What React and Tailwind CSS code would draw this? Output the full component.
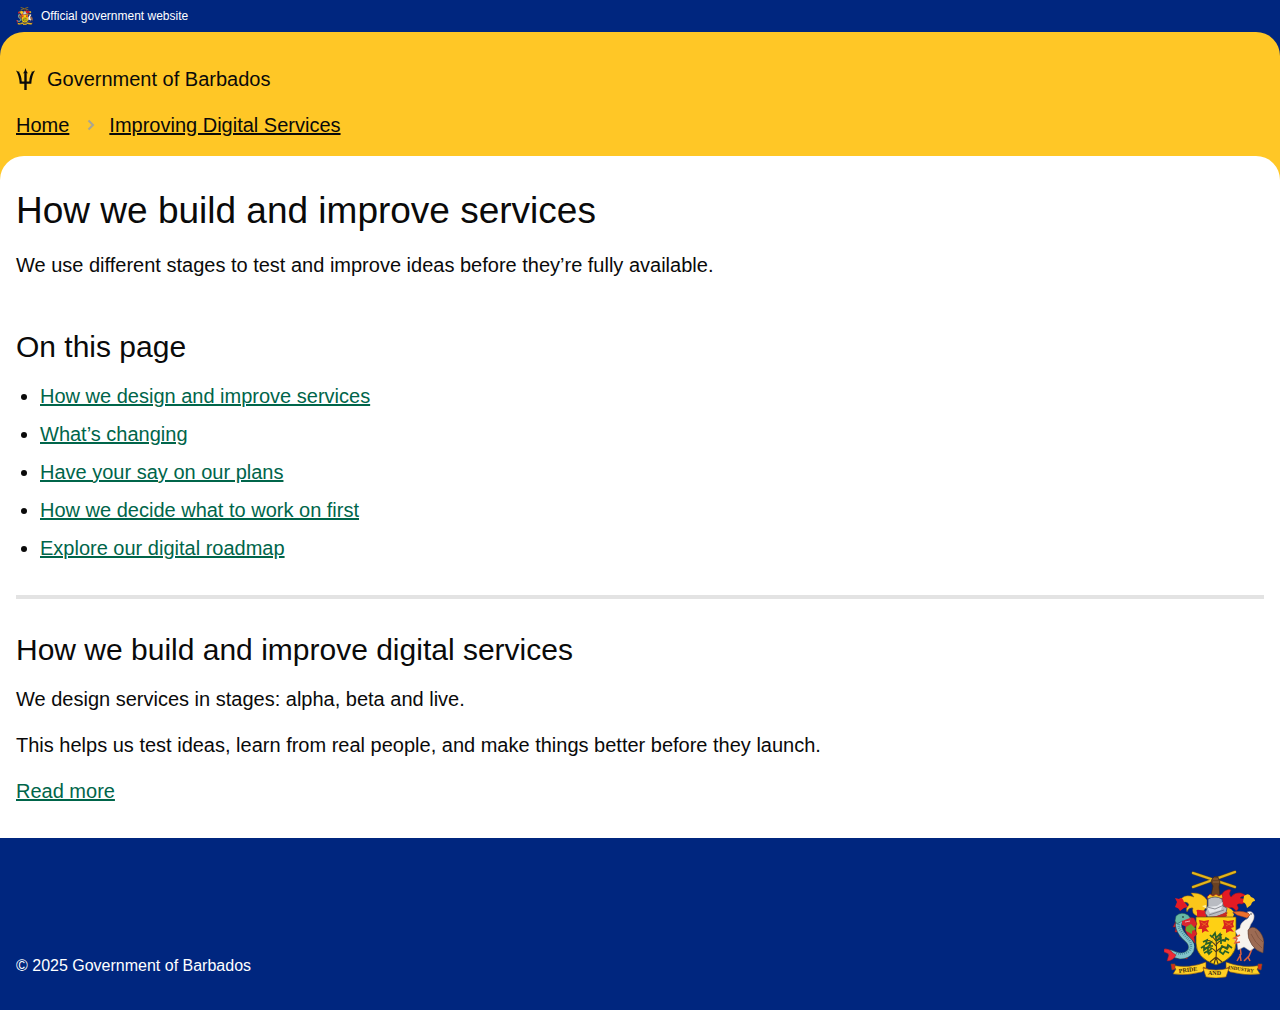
import React from 'react';

function CoatOfArms({ className }) {
  return (
    <svg viewBox="0 0 100 108" className={className} role="img" aria-label="Coat of arms of Barbados">
      {/* crossed cane and arm */}
      <g strokeLinecap="round" fill="none">
        <path d="M29 3 71 17M29 17 71 2" stroke="#705316" strokeWidth="3" />
        <path d="M29 3 71 17M29 17 71 2" stroke="#e3b51d" strokeWidth="2.200" />
      </g>
      <path d="M48 9q2-4 6-2l2 5-1 5 1 9h-9l2-10-2-4z" fill="#6b4222" stroke="#352315" strokeWidth=".6" />
      <path d="M49 9h5M49 12h6" stroke="#a57346" strokeWidth=".7" />
      {/* mantling */}
      <g strokeLinejoin="round">
        <path d="M43 30q-5-8-16-7l3 4q-8-3-12 1-3 2-4 5 3 2 7-1 3 0 4 3-4 3-2 7 2-5 6-4-2 5 4 8l6-4 4-6z" fill="#fbc61b" stroke="#8a5d16" strokeWidth=".5" />
        <path d="M20 32q-2-6-5-3l-4-1 2 4-2 5q4 1 5 4l4-3 4-1-2-3z" fill="#e31b23" />
        <path d="M33 42q-2-3 3-2l7 1-1 7q-6-1-9 1z" fill="#e31b23" />
        <path d="M38 36l4-1 1 4z" fill="#fff0a0" />
        <path d="M56 29q2-8 7-9 2-1 4 0-3 4 0 7 4-5 10-4 4 1 6 4-5-2-7 1 8 1 9 6-4-3-7 0-4-1-5 1 3 4-1 6-3-5-7-3 1 4-3 6l-6-8z" fill="#e31b23" stroke="#8c171a" strokeWidth=".5" />
        <path d="M80 26q5-4 7 1 4 1 4 4-3 0-4 4l-4 3q-1-5-4-6zM62 37l5 2 3 3-4 2-4-2z" fill="#fbc61b" />
        <path d="M60 46l6-5 4 3-1 3h-9z" fill="#fbc61b" />
      </g>
      <path d="M43 27l3-3 3 2 3-2 3 2 3-2 1 4-7 2-8-1z" fill="#f8c31b" stroke="#a71e1c" strokeWidth=".8" />
      {/* helmet */}
      <path d="M44 29q7-4 14 0l1 7 4 2-1 5q-9 5-18 4l-3-4 3-7z" fill="#b9bcc2" stroke="#55565d" strokeWidth=".8" />
      <path d="M43 37l10-1 6-4-2 8-11 3z" fill="#e6e8ec" />
      <path d="M43 37l8 2 9-4M45 45l15-5" stroke="#777a82" strokeWidth=".8" fill="none" />
      <path d="M44 47q10 0 18-5l1 4-3 2H44z" fill="#c92b24" />
      {/* shield */}
      <path d="M32 47h40v26q0 15-20 22-20-7-20-22z" fill="#fed014" stroke="#625012" strokeWidth=".7" />
      {/* flowers */}
      <path d="M35 50l5 1 5-1-1 4 1 3-3 1 3 4-4-1-3 2 0-4-4 0 2-4zM59 50l5 1 6-1-1 4 1 3-3 1 3 4-4-1-4 2 0-4-4 0 2-4z" fill="#d9261f" />
      <path d="M37 52l6 4M43 52l-5 4M61 52l7 4M68 52l-6 4" stroke="#f07b20" strokeWidth=".7" />
      {/* bearded fig tree */}
      <path d="M52 90q1-12 0-24M52 82q-4-6-12-4M52 82q6-7 13-4M52 76q-5-7-11-5M52 75q4-6 11-6M52 71l-4-5M53 70l5-6M52 87l-6 5M52 87l6 5M52 87l-2 7M52 87l2 7" stroke="#4e391a" strokeWidth="1.1" fill="none" />
      <path d="M37 78l3-2 0 4 4-3 0 5 4-4M39 72l4-2-1 4 5-2-2 4 4 0M46 65l2 2 3-4 1 5 4-4 1 4-5 3M65 70l-3-2-1 3-4-1 0 4M68 78l-4-3-1 4-5-3-2 5M40 83l4-2 1 3 3-3M65 83l-4-2-2 3-4-3" stroke="#286028" strokeWidth="1.7" fill="none" />
      {/* dolphin */}
      <path d="M22 47l8 1 3 6-3 4 3 6-3 3 1 6-6-5-4-8 1-7zM12 51l-3 6 3 0-1 5 4 0 1 5 5-2-5-12zM25 84l-2 5-6-2z" fill="#d8222c" stroke="#8b1a27" strokeWidth=".5" />
      <path d="M20 47q-7 4-5 11 2 6 8 11 6 5 4 11-3 6-11 6-5-1-9-3" stroke="#30545a" strokeWidth="6.500" strokeLinecap="round" fill="none" />
      <path d="M20 47q-7 4-5 11 2 6 8 11 6 5 4 11-3 6-11 6-5-1-9-3" stroke="#82c3cb" strokeWidth="5.300" strokeLinecap="round" fill="none" />
      <path d="M16 50q-3 6 1 11 4 5 8 9 4 5 0 11-5 4-13 2" stroke="#468b98" strokeWidth="2.500" strokeDasharray=".8 1.200" fill="none" />
      <path d="M12 46q5-5 12-1l3 4-3 4-6-2-5 3-2-3z" fill="#67b9a5" stroke="#235c4c" strokeWidth=".5" />
      <path d="M18 51l8-3 2 4-5 5-5-2z" fill="#d92531" /><path d="M21 52l5-1" stroke="#fff" strokeWidth=".6" />
      <circle cx="19" cy="47" r=".8" fill="#111" />
      <path d="M22 57l5-3 5 5-4 2 0 3-6-3z" fill="#6da52f" />
      <path d="M9 83q-4-5-9-4l0 3 5 2-2 7q6 0 9-6z" fill="#ee2a36" stroke="#861d29" strokeWidth=".5" />
      {/* pelican */}
      <path d="M76 76l1 8-4 7M76 84l1 7M88 79l-3 7-5 5M84 87l2 4" stroke="#de603b" strokeWidth="1.500" fill="none" />
      <path d="M83 42q5-2 7 3 1 4-3 9l-2 5 4 4 4 13-7 5-6-4-6 3-1-7-3-4 4-3-3-5 5-3q0-5 5-8 5-2 4-6z" fill="#f7f3ee" stroke="#a89c96" strokeWidth=".5" />
      <path d="M84 43q-7-3-15-1l4 3 10 3 3-3z" fill="#ed702d" stroke="#9d3d1b" strokeWidth=".5" />
      <circle cx="87" cy="44" r=".7" fill="#222" />
      <path d="M84 60q4-5 9-1 6 5 7 13l-1 11q-7-2-11-8-5-7-4-15z" fill="#9c6b54" stroke="#5d3d30" strokeWidth=".6" />
      <path d="M87 64q4 9 11 14M91 61q3 8 8 11" stroke="#7a4e3b" strokeWidth=".7" fill="none" />
      <path d="M76 65l-6 3 3 1-2 4 5-1" stroke="#de603b" strokeWidth="1.500" fill="none" />
      {/* motto ribbon */}
      <g stroke="#7c5116" strokeWidth=".6">
        <path d="M7 95q18 4 35-3l0 6-4 4Q24 106 9 104l3-5z" fill="#ffcf25" />
        <path d="M98 95q-18 4-36-3l0 6 4 4Q81 106 96 104l-3-5z" fill="#ffcf25" />
        <path d="M7 94l4 0 0 5-3 1zM98 94l-4 0 0 5 3 1zM39 97l5 2-2 3zM65 97l-4 2 2 3z" fill="#d62a1d" />
        <path d="M39 98q13 4 26 0l-3 9q-10 2-20 0z" fill="#ffcf25" />
      </g>
      <g fill="#3c290e" fontFamily="Liberation Serif, serif" fontSize="6" fontWeight="700">
        <text x="15" y="103" transform="rotate(-7 15 103)">PRIDE</text>
        <text x="44" y="105">AND</text>
        <text x="64" y="99" fontSize="5" transform="rotate(8 64 99)">INDUSTRY</text>
      </g>
    </svg>
  );
}

function Trident({ className }) {
  return (
    <svg viewBox="0 0 19 22" className={className} fill="currentColor" aria-hidden="true">
      <path d="M9.500 0Q10 3 12 5.500L10.700 5v8.500h2.600C13.300 9.500 14.500 6.500 16 4.200L14.700 4Q17 3.500 19 2.500 15.800 7.500 15.300 15.700H10.700V22H8.300v-6.300H3.700Q3.200 7.500 0 2.500 2 3.500 4.300 4L3 4.200C4.500 6.500 5.700 9.500 5.700 13.500H8.300V5L7 5.500Q9 3 9.500 0Z" />
    </svg>
  );
}

const sections = [
  'How we design and improve services',
  'What’s changing',
  'Have your say on our plans',
  'How we decide what to work on first',
  'Explore our digital roadmap',
];

const link = 'text-[#00654a] underline decoration-2 underline-offset-1';

export default function App() {
  return (
    <div className="bg-[#00267f] font-['Liberation_Sans',sans-serif] text-[20px] leading-[30px] text-[#0a0a0a]">
      <div className="flex h-8 items-center gap-2 px-4 text-[12px] leading-4 text-white">
        <CoatOfArms className="h-[18px] w-[17px]" />
        <span>Official government website</span>
      </div>
      <div className="rounded-t-3xl bg-[#ffc726]">
        <header className="flex flex-col gap-4 px-4 pt-8 pb-4">
          <div className="flex items-center gap-3">
            <Trident className="h-[22px] w-[19px]" />
            <span>Government of Barbados</span>
          </div>
          <nav aria-label="Breadcrumb">
            <ol className="flex items-center gap-4">
              <li><a href="#home" className="underline decoration-2 underline-offset-1">Home</a></li>
              <li className="flex items-center gap-3">
                <svg viewBox="0 0 12 12" className="size-3" fill="none" stroke="#a9a593" strokeWidth="2" aria-hidden="true"><path d="m3.500 1.500 4.500 4.500-4.500 4.500" /></svg>
                <a href="#services" className="underline decoration-2 underline-offset-1">Improving Digital Services</a>
              </li>
            </ol>
          </nav>
        </header>
        <main className="rounded-t-3xl bg-white px-4 py-8">
          <h1 className="text-[37px] leading-[46px]">How we build and improve services</h1>
          <p className="mt-4">We use different stages to test and improve ideas before they’re fully available.</p>
          <h2 className="mt-12 text-[30px] leading-[37px]">On this page</h2>
          <ul className="mt-4 flex list-disc flex-col gap-2 pl-6">
            {sections.map((s) => (
              <li key={s}><a href="#section" className={link}>{s}</a></li>
            ))}
          </ul>
          <hr className="my-8 border-t-4 border-[#e3e3e3]" />
          <h2 className="text-[30px] leading-[37px]">How we build and improve digital services</h2>
          <p className="mt-4">We design services in stages: alpha, beta and live.</p>
          <p className="mt-4">This helps us test ideas, learn from real people, and make things better before they launch.</p>
          <p className="mt-4"><a href="#more" className={link}>Read more</a></p>
        </main>
      </div>
      <footer className="flex items-end justify-between px-4 py-8 text-[16px] leading-6 text-white">
        <p>© 2025 Government of Barbados</p>
        <CoatOfArms className="h-[108px] w-[100px]" />
      </footer>
    </div>
  );
}
